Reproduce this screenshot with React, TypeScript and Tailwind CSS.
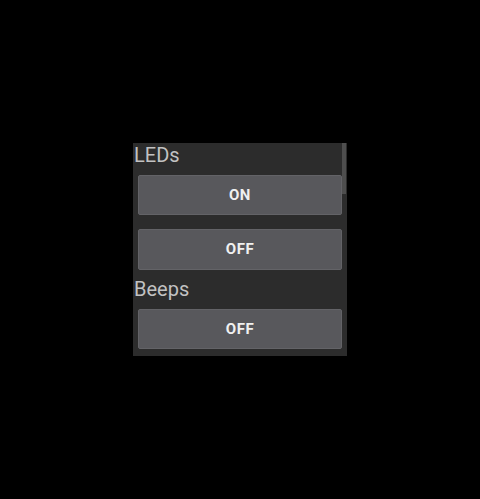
export default function App() {
  const font = { fontFamily: "Roboto, 'Noto Sans', sans-serif" };

  return (
    <div className="flex h-[499px] w-full items-center justify-center bg-black" style={font}>
      <div className="relative flex h-[213px] w-[214px] flex-col bg-[#2c2c2c] pl-[5px] pr-[5px]">
        {/* scroll thumb */}
        <div className="absolute right-[1px] top-0 h-[51px] w-[4px] bg-[#4e4e4e]" />

        <div className="-ml-[4px] h-[24px] text-[20px] leading-[24px] text-[#c2c2c2]">LEDs</div>
        <button className="mt-[8px] h-[40px] rounded-[2px] border border-[#636367] bg-[#58585c] text-[15px] font-bold tracking-[0.04em] text-[#f0f0f0]">
          ON
        </button>
        <button className="mt-[14px] h-[41px] rounded-[2px] border border-[#636367] bg-[#58585c] text-[15px] font-bold tracking-[0.04em] text-[#f0f0f0]">
          OFF
        </button>

        <div className="-ml-[4px] mt-[7px] h-[24px] text-[20px] leading-[24px] text-[#c2c2c2]">Beeps</div>
        <button className="mt-[8px] h-[40px] rounded-[2px] border border-[#636367] bg-[#58585c] text-[15px] font-bold tracking-[0.04em] text-[#f0f0f0]">
          OFF
        </button>
      </div>
    </div>
  );
}
